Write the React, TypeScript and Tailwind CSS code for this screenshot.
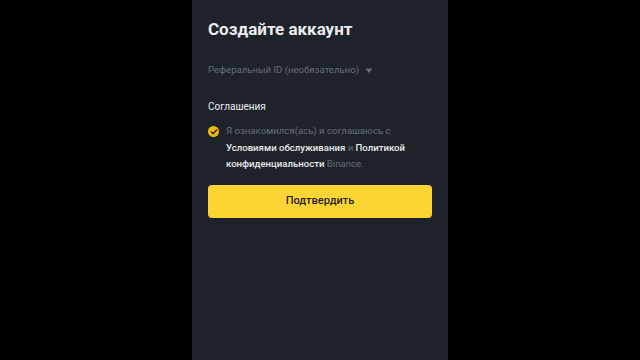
import { Check } from "lucide-react";

export default function App() {
	return (
		<div className="flex h-[360px] w-[640px] justify-center bg-black font-['Roboto','Noto_Sans',sans-serif]">
			<div className="flex h-full w-[256px] flex-col bg-[#1e2329] px-4 pt-[17px]">
				<h1 className="text-[17px] font-bold leading-[24px] text-[#eaecef]">Создайте аккаунт</h1>

				<div className="mt-[21px] flex items-center gap-1.5 text-[9.6px] leading-[16px] text-[#666e7a]">
					<span>Реферальный ID (необязательно)</span>
					<svg width="8" height="6" viewBox="0 0 8 6" className="mt-[1px]">
						<path d="M0.5 0.5h7L4 5z" fill="#666e7a" />
					</svg>
				</div>

				<div className="mt-[21px] text-[10px] leading-[16px] text-[#eaecef]">Соглашения</div>

				<div className="mt-[8px] flex gap-[7px]">
					<div className="mt-[3px] flex h-[11px] w-[11px] shrink-0 items-center justify-center rounded-full bg-[#f0b90b]">
						<Check className="h-[8px] w-[8px] text-[#1e2329]" strokeWidth={4} />
					</div>
					<p className="text-[9.6px] leading-[16.5px] text-[#666e7a]">
						Я ознакомился(ась) и соглашаюсь с
						<br />
						<span className="font-medium text-[#eaecef]">Условиями обслуживания</span> и{" "}
						<span className="font-medium text-[#eaecef]">Политикой</span>
						<br />
						<span className="font-medium text-[#eaecef]">конфиденциальности</span> Binance.
					</p>
				</div>

				<button
					type="button"
					className="mt-[12px] flex h-[33px] w-full items-center justify-center rounded-[4px] bg-[#fcd535] text-[11px] font-medium text-[#1e2329]"
				>
					Подтвердить
				</button>
			</div>
		</div>
	);
}
